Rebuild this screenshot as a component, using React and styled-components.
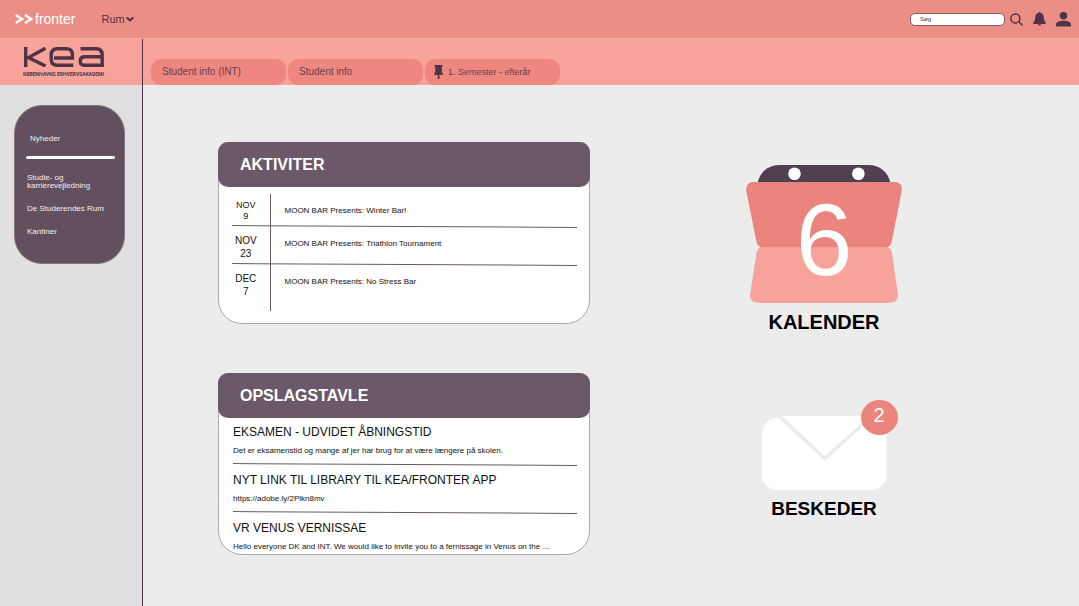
import React from "react";
import styled, { createGlobalStyle } from "styled-components";

const color = {
  bar: "#eb8f86",
  band: "#f7a39a",
  tab: "#ed877f",
  coral: "#eb847c",
  plum: "#6b5969",
  deep: "#4f3347",
  page: "#ececec",
  side: "#e0e0e0",
};

const GlobalStyle = createGlobalStyle`
  *, *::before, *::after { box-sizing: border-box; }
  body { margin: 0; background: ${color.page}; font-family: "Liberation Sans", Arial, sans-serif; color: #111; }
  h1, h2, h3, p, ul { margin: 0; padding: 0; }
  ul { list-style: none; }
  a { color: inherit; text-decoration: none; }
  button { border: 0; padding: 0; background: none; font: inherit; color: inherit; cursor: pointer; }
  svg { display: block; }
`;

const Page = styled.div`
  min-height: 100vh;
  display: flex;
  flex-direction: column;
`;

const TopBar = styled.header`
  display: flex;
  align-items: center;
  height: 39px;
  padding: 0 8px 0 15px;
  background: ${color.bar};
  border-bottom: 1px solid #f2aca4;
`;

const Brand = styled.a`
  display: flex;
  align-items: center;
  gap: 2px;
  color: #fff;
  font-size: 14px;
  line-height: 16px;
`;

const RoomButton = styled.button`
  display: flex;
  align-items: center;
  gap: 1px;
  margin-left: 26px;
  color: ${color.deep};
  font-size: 11px;
  line-height: 14px;
`;

const Tools = styled.div`
  display: flex;
  align-items: center;
  gap: 10px;
  margin-left: auto;
  color: ${color.deep};
`;

const SearchForm = styled.form`
  display: flex;
  align-items: center;
  gap: 5px;
`;

const SearchInput = styled.input`
  width: 95px;
  height: 13px;
  padding: 0 9px;
  border: 1px solid #8c5c66;
  border-radius: 5px;
  background: #fff;
  font-family: inherit;
  font-size: 6px;
  color: ${color.deep};
  &::placeholder { color: ${color.deep}; opacity: 1; }
`;

const Columns = styled.div`
  flex: 1;
  display: grid;
  grid-template-columns: 143px minmax(0, 1fr);
`;

const Sidebar = styled.aside`
  background: ${color.side};
  border-right: 1px solid ${color.deep};
`;

const LogoLink = styled.a`
  display: flex;
  flex-direction: column;
  gap: 4px;
  height: 46px;
  padding: 8px 0 0 23px;
  background: ${color.band};
  color: ${color.deep};
`;

const LogoCaption = styled.span`
  font-family: Roboto, "Liberation Sans", sans-serif;
  font-size: 5px;
  font-weight: 700;
  line-height: 6px;
  white-space: nowrap;
`;

const SideMenu = styled.nav`
  margin: 20px 17px 20px 14px;
  padding: 28px 10px 27px 12px;
  border: 1px solid #84787f;
  border-radius: 28px;
  background: #62505f;
  color: #f4eff2;
  font-size: 8px;
  line-height: 8px;
`;

const MenuTop = styled.a`
  display: block;
  padding-left: 3px;
  line-height: 10px;
`;

const MenuRule = styled.hr`
  height: 3px;
  margin: 12px -1px 15px;
  border: 0;
  border-radius: 2px;
  background: #fff;
`;

const MenuList = styled.ul`
  display: flex;
  flex-direction: column;
  gap: 15px;
`;

const Content = styled.div`
  display: flex;
  flex-direction: column;
`;

const TabBar = styled.nav`
  display: flex;
  align-items: flex-end;
  gap: 2px;
  height: 46px;
  padding-left: 8px;
  background: ${color.band};
`;

const Tab = styled.button`
  display: flex;
  align-items: center;
  gap: 5px;
  width: 135px;
  height: 26px;
  padding: 0 ${(p) => (p.$pinned ? 9 : 11)}px;
  border-radius: 10px;
  background: ${color.tab};
  color: #6b404e;
  font-size: ${(p) => (p.$pinned ? 9 : 10)}px;
  line-height: 12px;
  white-space: nowrap;
`;

const Main = styled.main`
  display: grid;
  grid-template-columns: minmax(0, 31fr) minmax(0, 39fr);
  align-items: start;
  padding: 57px 21px 50px 75px;
`;

const CardStack = styled.div`
  display: flex;
  flex-direction: column;
  gap: 49px;
`;

const Card = styled.section`
  border: 1px solid #aaa;
  border-radius: 10px 10px 24px 24px;
  background: #fff;
`;

const CardTitle = styled.h2`
  margin: -1px -1px 0;
  padding: 0 22px;
  border-radius: 10px;
  background: ${color.plum};
  color: #fff;
  font-size: 16px;
  line-height: 45px;
`;

const slantedRule = `
  content: "";
  position: absolute;
  left: 0;
  right: 0;
  height: 1px;
  background: ${color.plum};
  transform: rotate(0.3deg);
`;

const Events = styled.table`
  width: calc(100% - 25px);
  margin: 7px 12px 12px 13px;
  border-collapse: collapse;
`;

const EventRow = styled.tr`
  position: relative;
  height: ${(p) => p.$height}px;
  &:not(:last-child)::after { ${slantedRule} bottom: 0; }
`;

const EventDate = styled.th`
  width: 38px;
  padding: ${(p) => (p.$small ? 6 : 7)}px 10px 0 0;
  border-right: 1px solid ${color.plum};
  font-weight: 400;
  font-size: ${(p) => (p.$small ? 9 : 10)}px;
  line-height: ${(p) => (p.$small ? 11 : 13)}px;
  text-align: center;
  vertical-align: top;
`;

const EventName = styled.td`
  padding: 11px 0 0 14px;
  font-size: 8px;
  line-height: 12px;
  vertical-align: top;
`;

const Posts = styled.ul`
  padding: 0 12px 0 14px;
`;

const Post = styled.li`
  position: relative;
  height: 48px;
  padding-top: 6px;
  &:not(:last-child)::after { ${slantedRule} bottom: 1px; }
  &:last-child { height: 40px; }
`;

const PostTitle = styled.h3`
  font-size: 12px;
  font-weight: 400;
  line-height: 16px;
`;

const PostText = styled.p`
  margin-top: 5px;
  font-size: 8px;
  line-height: 12px;
  overflow: hidden;
  text-overflow: ellipsis;
  white-space: nowrap;
`;

const Tiles = styled.div`
  display: flex;
  flex-direction: column;
  align-items: center;
  gap: 82px;
  padding-top: 23px;
`;

const Tile = styled.a`
  display: flex;
  flex-direction: column;
  align-items: center;
  gap: 7px;
  color: #000;
  font-size: ${(p) => p.$size}px;
  font-weight: 700;
  line-height: 24px;
`;

const Envelope = styled.span`
  position: relative;
`;

const Badge = styled.span`
  position: absolute;
  top: -16px;
  right: -11px;
  width: 37px;
  height: 35px;
  border-radius: 50%;
  background: ${color.coral};
  color: #fff;
  font-size: 20px;
  font-weight: 400;
  line-height: 30px;
  text-align: center;
`;

const FronterMark = () => (
  <svg width="18" height="10" viewBox="0 0 18 10" fill="none" stroke="#fff" strokeWidth="2.3" aria-hidden="true">
    <path d="M.7 1 L7 5 L.7 9 M10 1 L16.3 5 L10 9" />
  </svg>
);

const ChevronIcon = () => (
  <svg width="8" height="6" viewBox="0 0 8 6" fill="none" stroke="currentColor" strokeWidth="2" aria-hidden="true">
    <path d="M.8 1.4 L4 4.4 L7.2 1.4" />
  </svg>
);

const SearchIcon = () => (
  <svg width="13" height="13" viewBox="0 0 13 13" fill="none" stroke="currentColor" strokeWidth="1.5" strokeLinecap="round" aria-hidden="true">
    <circle cx="5.4" cy="5.4" r="4.5" />
    <path d="M8.8 8.8 L12 12" />
  </svg>
);

const BellIcon = () => (
  <svg width="13" height="14" viewBox="0 0 13 14" fill="currentColor" aria-hidden="true">
    <path d="M6.5 0 C7.2 0 7.5 .5 7.6 1.1 C9.8 1.6 10.8 3.3 10.8 5.5 C10.8 8.4 11.5 9.3 12.6 10.3 C13.2 11 12.8 11.9 12 11.9 H1 C.2 11.9 -.2 11 .4 10.3 C1.5 9.3 2.2 8.4 2.2 5.5 C2.2 3.3 3.2 1.6 5.4 1.1 C5.5 .5 5.8 0 6.5 0 Z M4.8 12.3 H8.2 C8 14.2 5 14.2 4.8 12.3 Z" />
  </svg>
);

const PersonIcon = () => (
  <svg width="15" height="15" viewBox="0 0 15 15" fill="currentColor" aria-hidden="true">
    <circle cx="7.5" cy="3.7" r="3.7" />
    <path d="M0 14.6 V12.4 C0 9.7 4.2 8.7 7.5 8.7 C10.8 8.7 15 9.7 15 12.4 V14.6 Z" />
  </svg>
);

const PinIcon = () => (
  <svg width="9" height="14" viewBox="0 0 9 14" fill={color.deep} aria-hidden="true">
    <path d="M.5 0 H8.5 V1.4 H7.8 V7.6 H8.6 V10 H5.4 V14 H3.7 V10 H.4 V7.6 H1.2 V1.4 H.5 Z" />
  </svg>
);

const KeaMark = () => (
  <svg width="82" height="20" viewBox="0 0 82 20" fill="none" stroke="currentColor" strokeWidth="3.4" aria-hidden="true">
    <path d="M2.7 0 V20 M22.5 1.2 L5.5 10.6 L22.5 19" />
    <path d="M31 11 H49.4 V8 Q49.4 1.7 43.5 1.7 H34.5 Q28.2 1.7 28.2 8 V12.3 Q28.2 18.3 34.5 18.3 H50.3" />
    <path d="M57.5 1.7 H73 Q79.2 1.7 79.2 8 V18.3 H62 Q57.2 18.3 57.2 14 Q57.2 9.8 62 9.8 H79" />
  </svg>
);

const CalendarArt = () => (
  <svg width="156" height="138" viewBox="0 0 156 138" aria-hidden="true">
    <path fill="#4f404f" d="M11.5 18 C14 7 22 0 34 0 H122 C134 0 142 7 144.5 18 Z" />
    <circle cx="48.5" cy="8.7" r="6.3" fill="#fff" />
    <circle cx="112.4" cy="8.7" r="6.3" fill="#fff" />
    <path fill={color.band} d="M15 82 Q11 83 10.5 88 L4 130 Q3.5 138 14 138 H142 Q152.5 138 152 130 L146 88 Q145.4 83 141 82 Z" />
    <path fill={color.coral} d="M7.5 17 H148.500 Q157 17.500 155.700 26 L145.700 77 Q144.500 82.300 139 82.300 H17 Q11.500 82.300 10.500 77 L.3 26 Q-.8 17.500 7.500 17 Z" />
    <text x="78" y="110" fill="#fff" fontFamily="Liberation Sans, Arial, sans-serif" fontSize="102" fontWeight="400" textAnchor="middle">6</text>
  </svg>
);

const EnvelopeArt = () => (
  <svg width="125" height="74" viewBox="0 0 125 74" aria-hidden="true">
    <rect x="0" y="2" width="124.500" height="72" rx="15" fill="#fff" />
    <path d="M17 0 L63 42.500 L110 0" fill="#fff" stroke={color.page} strokeWidth="3.500" />
  </svg>
);

const events = [
  { month: "NOV", day: "9", name: "MOON BAR Presents: Winter Bar!", height: 33, small: true },
  { month: "NOV", day: "23", name: "MOON BAR Presents: Triathlon Tournament", height: 38 },
  { month: "DEC", day: "7", name: "MOON BAR Presents: No Stress Bar", height: 46 },
];

const posts = [
  { title: "EKSAMEN - UDVIDET ÅBNINGSTID", text: "Det er eksamenstid og mange af jer har brug for at være længere på skolen." },
  { title: "NYT LINK TIL LIBRARY TIL KEA/FRONTER APP", text: "https://adobe.ly/2Plkn8mv" },
  { title: "VR VENUS VERNISSAE", text: "Hello everyone DK and INT. We would like to invite you to a fernissage in Venus on the …" },
];

export default function App() {
  return (
    <Page>
      <GlobalStyle />
      <TopBar>
        <Brand href="#"><FronterMark />fronter</Brand>
        <RoomButton type="button">Rum<ChevronIcon /></RoomButton>
        <Tools>
          <SearchForm role="search" onSubmit={(e) => e.preventDefault()}>
            <SearchInput type="search" placeholder="Søg" aria-label="Søg" />
            <button type="submit" aria-label="Søg"><SearchIcon /></button>
          </SearchForm>
          <button type="button" aria-label="Notifikationer"><BellIcon /></button>
          <button type="button" aria-label="Profil"><PersonIcon /></button>
        </Tools>
      </TopBar>
      <Columns>
        <Sidebar>
          <LogoLink href="#" aria-label="KEA Københavns Erhvervsakademi">
            <KeaMark />
            <LogoCaption>KØBENHAVNS ERHVERVSAKADEMI</LogoCaption>
          </LogoLink>
          <SideMenu>
            <MenuTop href="#">Nyheder</MenuTop>
            <MenuRule />
            <MenuList>
              <li><a href="#">Studie- og karrierevejledning</a></li>
              <li><a href="#">De Studerendes Rum</a></li>
              <li><a href="#">Kantiner</a></li>
            </MenuList>
          </SideMenu>
        </Sidebar>
        <Content>
          <TabBar>
            <Tab type="button">Student info (INT)</Tab>
            <Tab type="button">Student info</Tab>
            <Tab type="button" $pinned><PinIcon />1. Semester - efterår</Tab>
          </TabBar>
          <Main>
            <CardStack>
              <Card>
                <CardTitle>AKTIVITER</CardTitle>
                <Events>
                  <tbody>
                    {events.map((e) => (
                      <EventRow key={e.name} $height={e.height}>
                        <EventDate scope="row" $small={e.small}>{e.month}<br />{e.day}</EventDate>
                        <EventName>{e.name}</EventName>
                      </EventRow>
                    ))}
                  </tbody>
                </Events>
              </Card>
              <Card>
                <CardTitle>OPSLAGSTAVLE</CardTitle>
                <Posts>
                  {posts.map((p) => (
                    <Post key={p.title}>
                      <PostTitle>{p.title}</PostTitle>
                      <PostText>{p.text}</PostText>
                    </Post>
                  ))}
                </Posts>
              </Card>
            </CardStack>
            <Tiles>
              <Tile href="#" $size={20}><CalendarArt />KALENDER</Tile>
              <Tile href="#" $size={19}>
                <Envelope><EnvelopeArt /><Badge>2</Badge></Envelope>
                BESKEDER
              </Tile>
            </Tiles>
          </Main>
        </Content>
      </Columns>
    </Page>
  );
}
